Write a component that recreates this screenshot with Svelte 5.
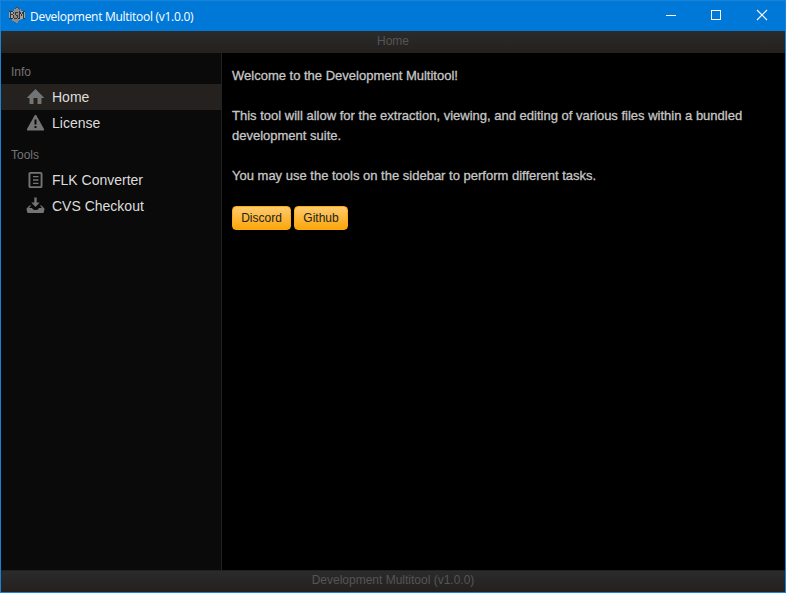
<script>
  const title = 'Development Multitool (v1.0.0)';
  const groups = [
    { name: 'Info', items: [{ label: 'Home', icon: 'home', active: true }, { label: 'License', icon: 'alert' }] },
    { name: 'Tools', items: [{ label: 'FLK Converter', icon: 'doc' }, { label: 'CVS Checkout', icon: 'install' }] }
  ];
</script>

<div class="window">
  <header class="titlebar">
    <svg class="logo" width="16" height="16" viewBox="0 0 16 16" shape-rendering="crispEdges">
      <path fill="#8d8b89" d="M7 0h2v1h1v1h2v2h1v8h-1v1h-2v1H9v2H7v-1H5v-1H3V4h2V2h1V1h1z" />
      <path fill="#4a4a4d" d="M7 0h2v1H7zM9 1h1v1H9zM6 1h1v1H6zM10 2h1v1h-1z" />
      <path fill="#a5a3a0" d="M0 4h5v8H0zM11 4h5v8h-5z" />
      <path fill="#37373b" d="M0 4h4v1H0zM1 5h1v6H1zM4 5h1v2H4zM2 7h2v1H2zM4 8h1v3H4zM0 11h4v1H0zM6 5h3v1H6zM6 6h1v2H6zM7 8h2v1H7zM8 9h1v2H8zM5 11h3v1H5zM10 4h1v8h-1zM11 5h1v2h-1zM12 7h1v2h-1zM13 5h1v2h-1zM14 4h1v8h-1zM9 11h1v1H9zM15 11h1v1h-1zM15 4h1v1h-1z" />
    </svg>
    <span class="caption">{title}</span>
    <div class="controls">
      <svg width="46" height="30" viewBox="0 0 46 30" shape-rendering="crispEdges"><path fill="#fff" d="M18 14h10v1H18z" /></svg>
      <svg width="46" height="30" viewBox="0 0 46 30" shape-rendering="crispEdges"><path fill="none" stroke="#fff" d="M17.500 9.500h9v9h-9z" /></svg>
      <svg width="46" height="30" viewBox="0 0 46 30"><path fill="none" stroke="#fff" stroke-width="1.150" d="M17 9l10 10M27 9L17 19" /></svg>
    </div>
  </header>

  <div class="toolbar top">Home</div>

  <div class="body">
    <nav>
      {#each groups as group}
        <h5>{group.name}</h5>
        {#each group.items as item}
          <div class="item" class:active={item.active}>
            <svg width="20" height="20" viewBox="0.500 0 20 20" fill="#737475">
              {#if item.icon === 'home'}
                <path d="M10 2L18.400 10.400Q18.700 11 17.800 11H16V16.500Q16 17 15.500 17H12V11H8v6H4.500Q4 17 4 16.500V11H2.200Q1.300 11 1.600 10.400z" />
              {:else if item.icon === 'alert'}
                <path fill-rule="evenodd" d="M9.200 2.300Q10 1 10.800 2.300L18.500 16Q18.900 17.500 18 17.500H2Q1.100 17.500 1.500 16zM9 6.500v5h2v-5zM9 13v2h2v-2z" />
              {:else if item.icon === 'doc'}
                <path fill="none" stroke="#737475" stroke-width="1.900" d="M4.900 2.900h10.200q.95 0 .95.950v12.300q0 .95-.95.950H4.900q-.95 0-.95-.95V3.850q0-.95.950-.95z" />
                <path d="M7.500 6h5.500v1.300H7.500zM7.500 9.300h5.500v1.400H7.500zM7.500 12.700h5.500v1.300H7.500z" />
              {:else}
                <path d="M8.800 1.500h2.400V6.500h3L10 11 5.800 6.500h3zM1.300 12.200L4 9.500h1.700L3.500 12h2.700q.6 0 .8.700.5 1.300 3 1.300t3-1.300q.2-.7.800-.7h2.700L14.300 9.500H16l2.700 2.700q.4.500.2 1.200l-.6 2.800q-.2.800-1 .8H2.700q-.8 0-1-.8l-.6-2.800q-.2-.7.200-1.200z" />
              {/if}
            </svg>
            <span>{item.label}</span>
          </div>
        {/each}
      {/each}
    </nav>
    <main>
      <p>Welcome to the Development Multitool!</p>
      <p>This tool will allow for the extraction, viewing, and editing of various files within a bundled<br />development suite.</p>
      <p>You may use the tools on the sidebar to perform different tasks.</p>
      <div class="buttons">
        <button class="discord">Discord</button>
        <button class="github">Github</button>
      </div>
    </main>
  </div>

  <footer class="toolbar bottom">{title}</footer>
</div>

<style>
  :global(body) { margin: 0; overflow: hidden; background: #000; }
  .window {
    box-sizing: border-box; width: 786px; height: 593px;
    display: flex; flex-direction: column;
    border: 1px solid #1883d7; background: #000;
    font-family: "Liberation Sans", Arial, sans-serif; cursor: default;
  }
  .titlebar {
    flex: 0 0 30px; display: flex; align-items: center;
    background: #0078d7; color: #fff;
    font: 12px "Open Sans", "Noto Sans", sans-serif;
  }
  .logo { margin-left: 8px; margin-top: -2px; }
  .caption { margin-left: 5px; letter-spacing: -0.28px; white-space: nowrap; }
  .controls { margin-left: auto; display: flex; margin-right: -1px; }
  .toolbar {
    box-sizing: border-box; flex: 0 0 22px; text-align: center;
    background: linear-gradient(#2b2b2c, #24201e); color: #555;
    font-size: 12px; line-height: 20px;
  }
  .bottom { border-top: 1px solid #222; line-height: 19px; }
  .body { flex: 1; display: flex; min-height: 0; }
  nav { box-sizing: border-box; flex: 0 0 221px; background: #0a0a0a; border-right: 1px solid #222; }
  h5 {
    margin: 0; padding: 10px 10px 3px; height: 18px;
    font-size: 12px; line-height: 18px; font-weight: 400; color: #747474;
  }
  .item {
    height: 26px; display: flex; align-items: center; padding-left: 25px;
    font-size: 14px; color: #ddd;
  }
  .item span { margin-left: 6px; }
  .active { background: #25211e; }
  main { padding: 13px 10px; color: #c6c6c6; }
  p {
    margin: 0 0 20px; font-size: 13px; line-height: 20px; white-space: nowrap;
    -webkit-text-stroke: 0.3px #c6c6c6;
  }
  .buttons { display: flex; gap: 3px; margin-top: 20px; }
  button {
    box-sizing: border-box; height: 24px; padding: 0; border: 1px solid #fdab13; border-radius: 4px;
    background: linear-gradient(#fecb6e, #fca60a); color: #222;
    font: 12px "Liberation Sans", Arial, sans-serif;
  }
  .discord { width: 59px; }
  .github { width: 54px; }
</style>
